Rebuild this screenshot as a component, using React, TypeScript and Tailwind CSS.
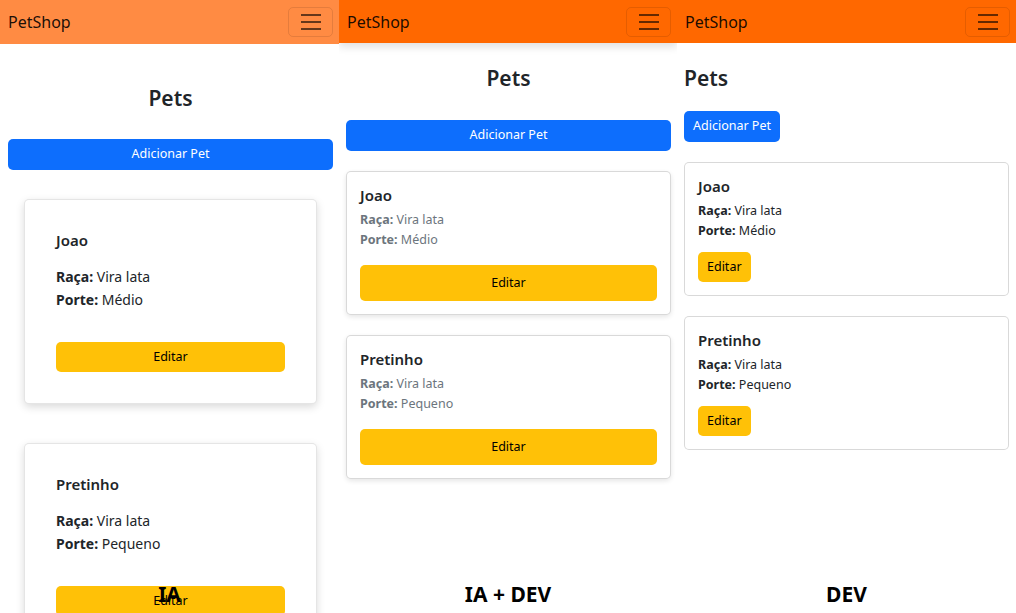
import type { ReactNode } from 'react'

interface Pet {
  name: string
  raca: string
  porte: string
}

const pets: Pet[] = [
  { name: 'Joao', raca: 'Vira lata', porte: 'Médio' },
  { name: 'Pretinho', raca: 'Vira lata', porte: 'Pequeno' },
]

function Toggler() {
  return (
    <div className="flex h-[30px] w-[45px] flex-col items-center justify-center gap-[5px] rounded-[5px] border border-black/10">
      <span className="h-[2px] w-[20px] bg-black/60" />
      <span className="h-[2px] w-[20px] bg-black/60" />
      <span className="h-[2px] w-[20px] bg-black/60" />
    </div>
  )
}

function Navbar({ light, shadow }: { light?: boolean; shadow?: boolean }) {
  return (
    <nav
      className={
        light
          ? 'flex h-[44px] shrink-0 items-center justify-between bg-[#ff8b43] pl-2 pr-[6px]'
          : shadow
            ? 'relative z-10 flex h-[43px] shrink-0 items-center justify-between bg-[#ff6800] pl-2 pr-[6px] shadow-[0_4px_8px_rgba(0,0,0,0.12)]'
            : 'flex h-[43px] shrink-0 items-center justify-between bg-[#ff6800] pl-2 pr-[6px]'
      }
    >
      <span className="text-[16px] text-black/90">PetShop</span>
      <Toggler />
    </nav>
  )
}

function Label({ children }: { children: ReactNode }) {
  return (
    <div className="pointer-events-none absolute inset-x-0 bottom-[6px] text-center text-[21px] font-bold leading-[26px] text-black">
      {children}
    </div>
  )
}

export default function App() {
  return (
    <div className="flex h-[613px] w-[1016px] overflow-hidden bg-white font-['Noto_Sans',sans-serif] text-[#212529]">
      {/* IA */}
      <section className="relative flex w-[339px] shrink-0 flex-col overflow-hidden">
        <Navbar light />
        <div className="flex flex-col pl-2 pr-[6px]">
          <h2 className="mt-[41px] text-center text-[21px] font-semibold leading-[26px]">Pets</h2>
          <button className="mt-[28px] h-[31px] rounded-[5px] bg-[#0d6efd] text-[12.5px] text-white">
            Adicionar Pet
          </button>
          <div className="flex flex-col gap-[39px] px-4 pt-[29px]">
            {pets.map((pet) => (
              <div
                key={pet.name}
                className="flex flex-col rounded-[5px] border border-black/10 bg-white px-[31px] pb-[31px] pt-[30px] shadow-[0_3px_8px_rgba(0,0,0,0.15)]"
              >
                <h3 className="text-[15px] font-semibold leading-[20px]">{pet.name}</h3>
                <p className="mt-[15px] text-[14px] leading-[23px]">
                  <b className="font-bold">Raça:</b> {pet.raca}
                </p>
                <p className="text-[14px] leading-[23px]">
                  <b className="font-bold">Porte:</b> {pet.porte}
                </p>
                <button className="mt-[31px] h-[30px] rounded-[5px] bg-[#ffc107] text-[12.5px] text-black">
                  Editar
                </button>
              </div>
            ))}
          </div>
        </div>
        <Label>IA</Label>
      </section>

      {/* IA + DEV */}
      <section className="relative flex w-[338px] shrink-0 flex-col overflow-hidden">
        <Navbar shadow />
        <div className="flex flex-col pl-[7px] pr-[6px]">
          <h2 className="mt-[22px] text-center text-[21px] font-semibold leading-[26px]">Pets</h2>
          <button className="mt-[29px] h-[31px] rounded-[5px] bg-[#0d6efd] text-[12.5px] text-white">
            Adicionar Pet
          </button>
          <div className="flex flex-col gap-[20px] pt-[20px]">
            {pets.map((pet) => (
              <div
                key={pet.name}
                className="flex flex-col rounded-[5px] border border-black/15 bg-white p-[13px] shadow-[0_2px_5px_rgba(0,0,0,0.1)]"
              >
                <h3 className="text-[15px] font-semibold leading-[20px]">{pet.name}</h3>
                <p className="mt-[5px] text-[12.5px] leading-[20px] text-[#6c757d]">
                  <b className="font-bold">Raça:</b> {pet.raca}
                </p>
                <p className="text-[12.5px] leading-[20px] text-[#6c757d]">
                  <b className="font-bold">Porte:</b> {pet.porte}
                </p>
                <button className="mt-[15px] h-[36px] rounded-[5px] bg-[#ffc107] text-[12.5px] text-black">
                  Editar
                </button>
              </div>
            ))}
          </div>
        </div>
        <Label>IA + DEV</Label>
      </section>

      {/* DEV */}
      <section className="relative flex w-[339px] shrink-0 flex-col overflow-hidden">
        <Navbar />
        <div className="flex flex-col items-start pl-[7px] pr-[7px]">
          <h2 className="mt-[22px] text-[21px] font-semibold leading-[26px]">Pets</h2>
          <button className="mt-[20px] h-[31px] rounded-[5px] bg-[#0d6efd] px-[9px] text-[12.5px] text-white">
            Adicionar Pet
          </button>
          <div className="flex w-full flex-col gap-[20px] pt-[20px]">
            {pets.map((pet) => (
              <div
                key={pet.name}
                className="flex flex-col items-start rounded-[5px] border border-black/15 bg-white p-[13px]"
              >
                <h3 className="text-[15px] font-semibold leading-[20px]">{pet.name}</h3>
                <p className="mt-[5px] text-[12.5px] leading-[20px]">
                  <b className="font-bold">Raça:</b> {pet.raca}
                </p>
                <p className="text-[12.5px] leading-[20px]">
                  <b className="font-bold">Porte:</b> {pet.porte}
                </p>
                <button className="mt-[11px] h-[30px] rounded-[5px] bg-[#ffc107] px-[9px] text-[12.5px] text-black">
                  Editar
                </button>
              </div>
            ))}
          </div>
        </div>
        <Label>DEV</Label>
      </section>
    </div>
  )
}
